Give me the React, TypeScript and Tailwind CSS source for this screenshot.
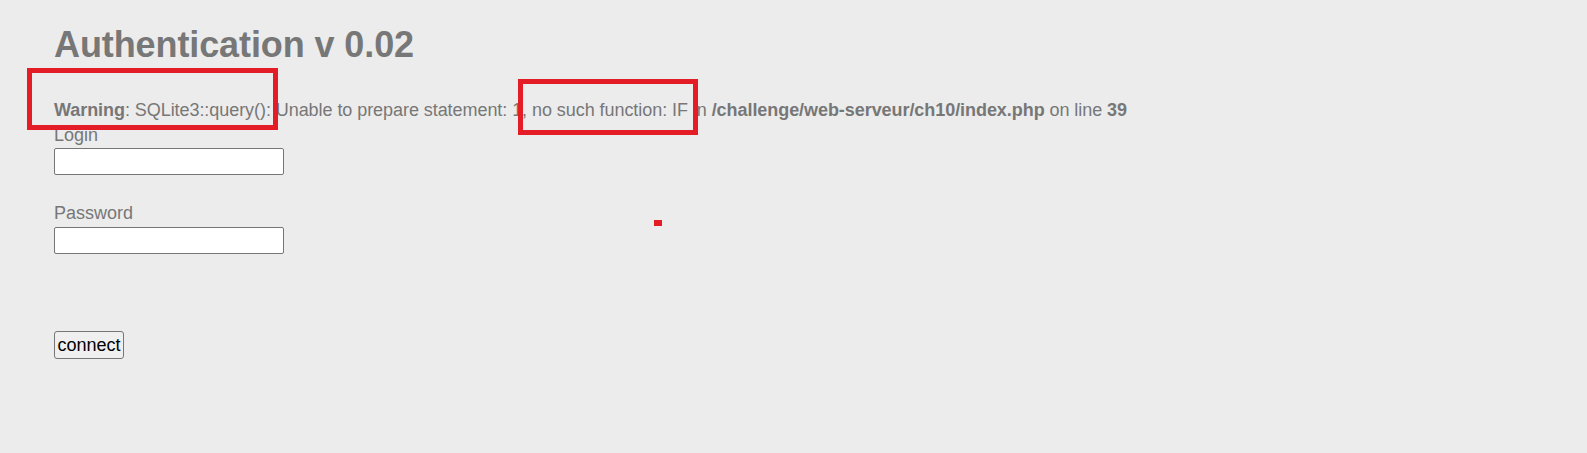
export default function App() {
  return (
    <div className="relative min-h-[453px] w-full bg-[#ececec] font-['Liberation_Sans',Arial,sans-serif] text-[#777777]">
      <div className="pl-[54px] pt-[27px]">
        <h1 className="text-[36px] font-bold leading-[36px] tracking-[-0.1px]">Authentication v 0.02</h1>

        <div className="mt-[37px] whitespace-nowrap text-[18px] leading-[20px] tracking-[-0.06px]">
          <b>Warning</b>: SQLite3::query(): Unable to prepare statement: 1, no such function: IF in{' '}
          <b>/challenge/web-serveur/ch10/index.php</b> on line <b>39</b>
        </div>

        <form className="mt-[5px] flex flex-col items-start text-[18px] leading-[20px]">
          <label>Login</label>
          <input
            type="text"
            className="mt-[3px] h-[27px] w-[230px] rounded-[2px] border border-[#767676] bg-white"
          />
          <label className="mt-[28px]">Password</label>
          <input
            type="password"
            className="mt-[4px] h-[27px] w-[230px] rounded-[2px] border border-[#767676] bg-white"
          />
          <button
            type="button"
            className="mt-[77px] h-[28px] w-[70px] rounded-[3px] border border-[#767676] bg-[#efefef] text-[18px] leading-[20px] text-black"
          >
            connect
          </button>
        </form>
      </div>

      {/* annotation marks over the page */}
      <div className="absolute left-[27px] top-[68px] h-[62px] w-[251px] border-[5px] border-[#e31c25]" />
      <div className="absolute left-[518px] top-[79px] h-[56px] w-[180px] border-[5px] border-[#e31c25]" />
      <div className="absolute left-[654px] top-[220px] h-[6px] w-[8px] bg-[#e31c25]" />
    </div>
  );
}
